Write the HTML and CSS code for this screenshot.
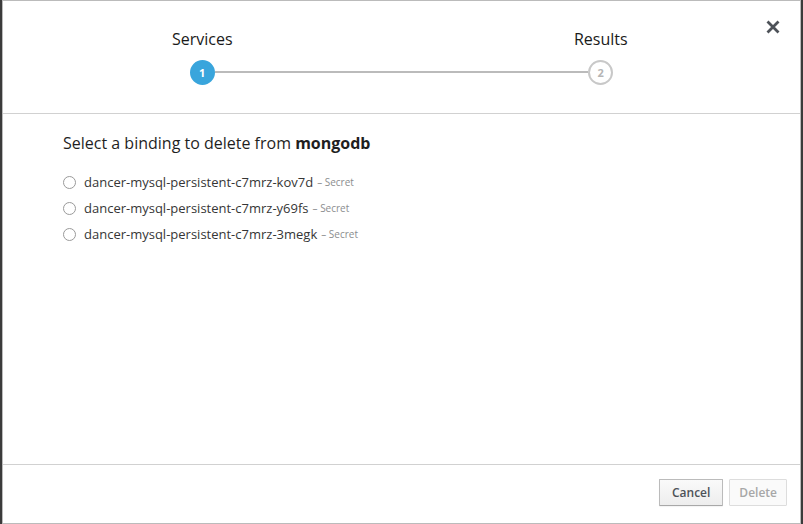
FILE: index.html
```html
<!DOCTYPE html>
<html>
<head>
<meta charset="utf-8">
<link rel="stylesheet" href="styles.css">
</head>
<body>
<div class="modal">
  <div class="header">
    <div class="steps">
      <div class="step">
        <div class="step-title">Services</div>
        <div class="step-track">
          <span class="fill"></span>
          <span class="dot active">1</span>
          <span class="line"></span>
        </div>
      </div>
      <div class="step">
        <div class="step-title">Results</div>
        <div class="step-track">
          <span class="line"></span>
          <span class="dot">2</span>
          <span class="fill"></span>
        </div>
      </div>
    </div>
    <button class="close" aria-label="Close">
      <svg width="14" height="14" viewBox="0 0 14 14"><path d="M1.5 1.5 L12.5 12.5 M12.5 1.5 L1.5 12.5" stroke="#4d5258" stroke-width="2.8" stroke-linecap="butt"/></svg>
    </button>
  </div>
  <div class="body">
    <h3 class="prompt">Select a binding to delete from <strong>mongodb</strong></h3>
    <ul class="options">
      <li class="option"><span class="radio"></span><span class="name">dancer-mysql-persistent-c7mrz-kov7d</span><span class="kind">– Secret</span></li>
      <li class="option"><span class="radio"></span><span class="name">dancer-mysql-persistent-c7mrz-y69fs</span><span class="kind">– Secret</span></li>
      <li class="option"><span class="radio"></span><span class="name">dancer-mysql-persistent-c7mrz-3megk</span><span class="kind">– Secret</span></li>
    </ul>
  </div>
  <div class="footer">
    <button class="btn">Cancel</button>
    <button class="btn disabled">Delete</button>
  </div>
</div>
</body>
</html>
```

FILE: styles.css
```css
* { box-sizing: border-box; }
html, body { margin: 0; height: 100%; }
body {
  background: #3b3b3b;
  font-family: "Open Sans", "Liberation Sans", sans-serif;
  color: #363636;
  padding: 0 2px 0 2px;
}
.modal {
  position: relative;
  height: 524px;
  background: #fff;
  border: 1px solid #bbb;
  display: flex;
  flex-direction: column;
}
.header {
  position: relative;
  height: 113px;
  border-bottom: 1px solid #d1d1d1;
  flex: none;
}
.steps {
  display: flex;
  padding-top: 27px;
}
.step {
  flex: 1;
  display: flex;
  flex-direction: column;
  align-items: center;
}
.step-title {
  font-size: 16px;
  line-height: 22px;
  color: #1a1a1a;
  margin-bottom: 9px;
}
.step-track {
  width: 100%;
  display: flex;
  align-items: center;
  height: 26px;
}
.fill { flex: 1; }
.line { flex: 1; height: 2px; background: #bbb; }
.dot {
  flex: none;
  width: 25px;
  height: 25px;
  border-radius: 50%;
  border: 2px solid #c8c8c8;
  color: #b5b5b5;
  font-size: 11px;
  font-weight: 700;
  display: flex;
  align-items: center;
  justify-content: center;
  background: #fff;
}
.dot.active {
  background: #39a5dc;
  border-color: #39a5dc;
  color: #fff;
}
.close {
  position: absolute;
  top: 19px;
  right: 20px;
  border: 0;
  background: none;
  padding: 0;
  width: 14px;
  height: 14px;
  display: flex;
}
.body {
  flex: 1;
  padding: 18px 60px;
}
.prompt {
  margin: 0 0 19px;
  font-size: 16px;
  font-weight: 400;
  line-height: 22px;
  color: #1f1f1f;
}
.prompt strong { font-weight: 700; }
.options {
  list-style: none;
  margin: 0;
  padding: 0;
  display: flex;
  flex-direction: column;
  gap: 8px;
}
.option {
  display: flex;
  align-items: center;
  height: 18px;
  font-size: 13px;
  color: #363636;
}
.radio {
  width: 13px;
  height: 13px;
  border: 1px solid #9a9a9a;
  border-radius: 50%;
  margin: 0 8px 0 0;
  flex: none;
}
.kind {
  font-size: 10px;
  color: #8b8d8f;
  margin-left: 4px;
}
.footer {
  flex: none;
  height: 59px;
  border-top: 1px solid #d1d1d1;
  display: flex;
  justify-content: flex-end;
  align-items: flex-start;
  gap: 6px;
  padding: 14px 13px 0 0;
}
.btn {
  font-family: "Open Sans", "Liberation Sans", sans-serif;
  font-size: 12px;
  font-weight: 600;
  height: 27px;
  padding: 0 12px;
  border: 1px solid #bbb;
  border-bottom-color: #a8a8a8;
  border-radius: 1px;
  background: linear-gradient(#fafafa, #ededed);
  color: #4d5258;
  box-shadow: 0 1px 1px rgba(0,0,0,0.05);
}
.btn.disabled {
  background: #fafafa;
  border-color: #ddd;
  color: #a7a7a7;
  box-shadow: none;
  padding: 0 9px;
}
```
